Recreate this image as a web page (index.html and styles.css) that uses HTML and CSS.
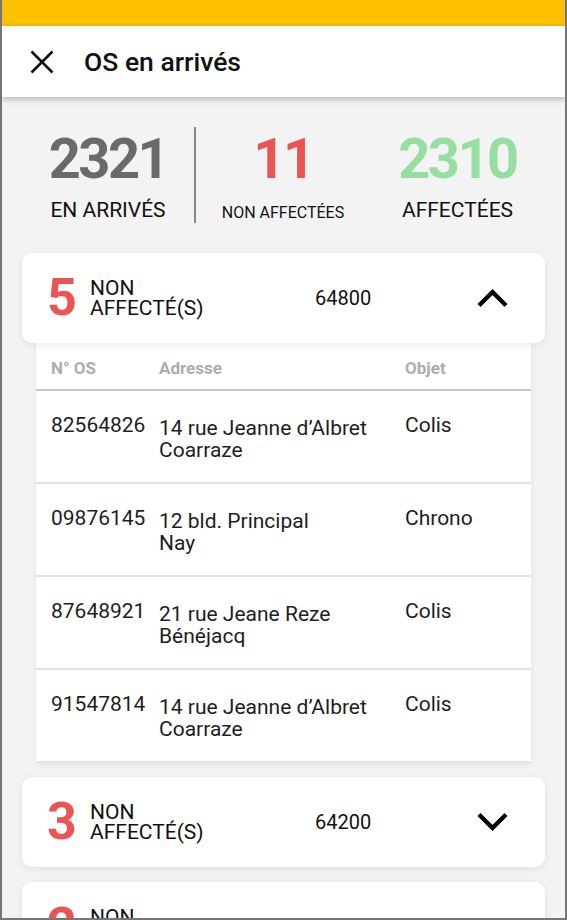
FILE: index.html
```html
<!DOCTYPE html>
<html lang="fr">
<head>
<meta charset="utf-8">
<title>OS en arrivés</title>
<link rel="stylesheet" href="styles.css">
</head>
<body>
<div class="device">
  <div class="statusbar"></div>
  <header class="appbar">
    <svg class="close" width="24" height="24" viewBox="0 0 24 24"><path d="M1.5 1.5L22.5 22.5M22.5 1.5L1.5 22.5" stroke="#111" stroke-width="2.6" fill="none"/></svg>
    <h1 class="title">OS en arrivés</h1>
  </header>
  <main class="content">
    <section class="stats">
      <div class="stat stat-first">
        <div class="num num-gray">2321</div>
        <div class="lbl">EN ARRIVÉS</div>
      </div>
      <div class="stat">
        <div class="num num-red">11</div>
        <div class="lbl lbl-small">NON AFFECTÉES</div>
      </div>
      <div class="stat">
        <div class="num num-green">2310</div>
        <div class="lbl">AFFECTÉES</div>
      </div>
    </section>

    <section class="group">
      <div class="card">
        <div class="count">5</div>
        <div class="clabel"><div>NON</div><div>AFFECTÉ(S)</div></div>
        <div class="zip">64800</div>
        <svg class="chev" width="32" height="20" viewBox="0 0 32 20"><path d="M3 17.5L16.5 4L30 17.5" stroke="#000" stroke-width="4.4" fill="none"/></svg>
      </div>
      <div class="panel">
        <div class="thead">
          <div>N° OS</div><div>Adresse</div><div>Objet</div>
        </div>
        <div class="row">
          <div class="c-num">82564826</div>
          <div class="c-addr">14 rue Jeanne d’Albret<br>Coarraze</div>
          <div class="c-obj">Colis</div>
        </div>
        <div class="row">
          <div class="c-num">09876145</div>
          <div class="c-addr">12 bld. Principal<br>Nay</div>
          <div class="c-obj">Chrono</div>
        </div>
        <div class="row">
          <div class="c-num">87648921</div>
          <div class="c-addr">21 rue Jeane Reze<br>Bénéjacq</div>
          <div class="c-obj">Colis</div>
        </div>
        <div class="row">
          <div class="c-num">91547814</div>
          <div class="c-addr">14 rue Jeanne d’Albret<br>Coarraze</div>
          <div class="c-obj">Colis</div>
        </div>
      </div>
    </section>

    <section class="group group-next">
      <div class="card">
        <div class="count">3</div>
        <div class="clabel"><div>NON</div><div>AFFECTÉ(S)</div></div>
        <div class="zip">64200</div>
        <svg class="chev" width="32" height="20" viewBox="0 0 32 20"><path d="M3 2.5L16.5 16L30 2.5" stroke="#000" stroke-width="4.4" fill="none"/></svg>
      </div>
    </section>

    <section class="group group-next">
      <div class="card">
        <div class="count">2</div>
        <div class="clabel"><div>NON</div><div>AFFECTÉ(S)</div></div>
        <div class="zip">64000</div>
        <svg class="chev" width="32" height="20" viewBox="0 0 32 20"><path d="M3 2.5L16.5 16L30 2.5" stroke="#000" stroke-width="4.4" fill="none"/></svg>
      </div>
    </section>
  </main>
</div>
</body>
</html>
```

FILE: styles.css
```css
* { box-sizing: border-box; }
html, body { margin: 0; padding: 0; }
body {
  font-family: Roboto, "Noto Sans", "Liberation Sans", sans-serif;
  color: #1a1a1a;
  background: #f3f3f3;
}
.device {
  width: 567px;
  height: 920px;
  overflow: hidden;
  background: #f3f3f3;
  border: 2px solid #767676;
  border-top: none;
  position: relative;
}
.statusbar {
  height: 26px;
  background: #ffc000;
}
.appbar {
  height: 71px;
  background: #fff;
  display: flex;
  align-items: center;
  padding-left: 28px;
  box-shadow: 0 2px 6px rgba(0,0,0,0.28);
  position: relative;
  z-index: 2;
}
.close { display: block; flex: none; }
.title {
  margin: 0 0 0 30px;
  font-size: 26.5px;
  font-weight: 500;
  color: #111;
  line-height: 30px;
}
.content {
  padding: 0 20px;
}
.stats {
  margin-top: 30px;
  display: grid;
  grid-template-columns: 174px 174px 1fr;
  height: 96px;
}
.stat {
  display: flex;
  flex-direction: column;
  align-items: center;
}
.stat-first { border-right: 2px solid #858585; }
.num {
  margin-top: 4px;
  font-size: 56px;
  line-height: 56px;
  font-weight: 700;
  letter-spacing: -2.5px;
}
.num-gray { color: #6a6a6a; }
.num-red { color: #ec5353; }
.num-green { color: #97dea2; }
.lbl {
  margin-top: 13px;
  font-size: 21px;
  line-height: 20px;
  color: #111;
}
.lbl-small {
  font-size: 16px;
  padding-top: 3px;
}
.group { margin-top: 30px; }
.group-next { margin-top: 14px; }
.group-next + .group-next { margin-top: 15px; }
.card {
  height: 90px;
  background: #fff;
  border-radius: 10px;
  display: flex;
  align-items: center;
  padding: 0 37px 0 25px;
  box-shadow: 0 2px 8px rgba(0,0,0,0.08);
  position: relative;
  z-index: 1;
}
.count {
  width: 29px;
  font-size: 52px;
  line-height: 52px;
  font-weight: 700;
  color: #ec5353;
}
.clabel {
  margin-left: 14px;
  width: 225px;
  font-size: 21px;
  line-height: 20px;
  color: #111;
}
.zip {
  font-size: 20px;
  line-height: 20px;
  color: #111;
}
.chev { margin-left: auto; display: block; flex: none; }
.panel {
  margin: 0 14px;
  background: #fff;
  box-shadow: 0 2px 6px rgba(0,0,0,0.07);
}
.thead, .row {
  display: grid;
  grid-template-columns: 108px 246px 1fr;
  padding-left: 15px;
  padding-right: 15px;
}
.thead {
  height: 48px;
  padding-top: 15px;
  border-bottom: 2px solid #c6c6c6;
  font-size: 17px;
  line-height: 20px;
  font-weight: 700;
  color: #adadad;
}
.row {
  height: 93px;
  padding-top: 23px;
  border-bottom: 2px solid #e3e3e3;
  font-size: 21px;
  line-height: 22px;
  color: #1e1e1e;
}
.c-addr { padding-top: 3px; }
```
